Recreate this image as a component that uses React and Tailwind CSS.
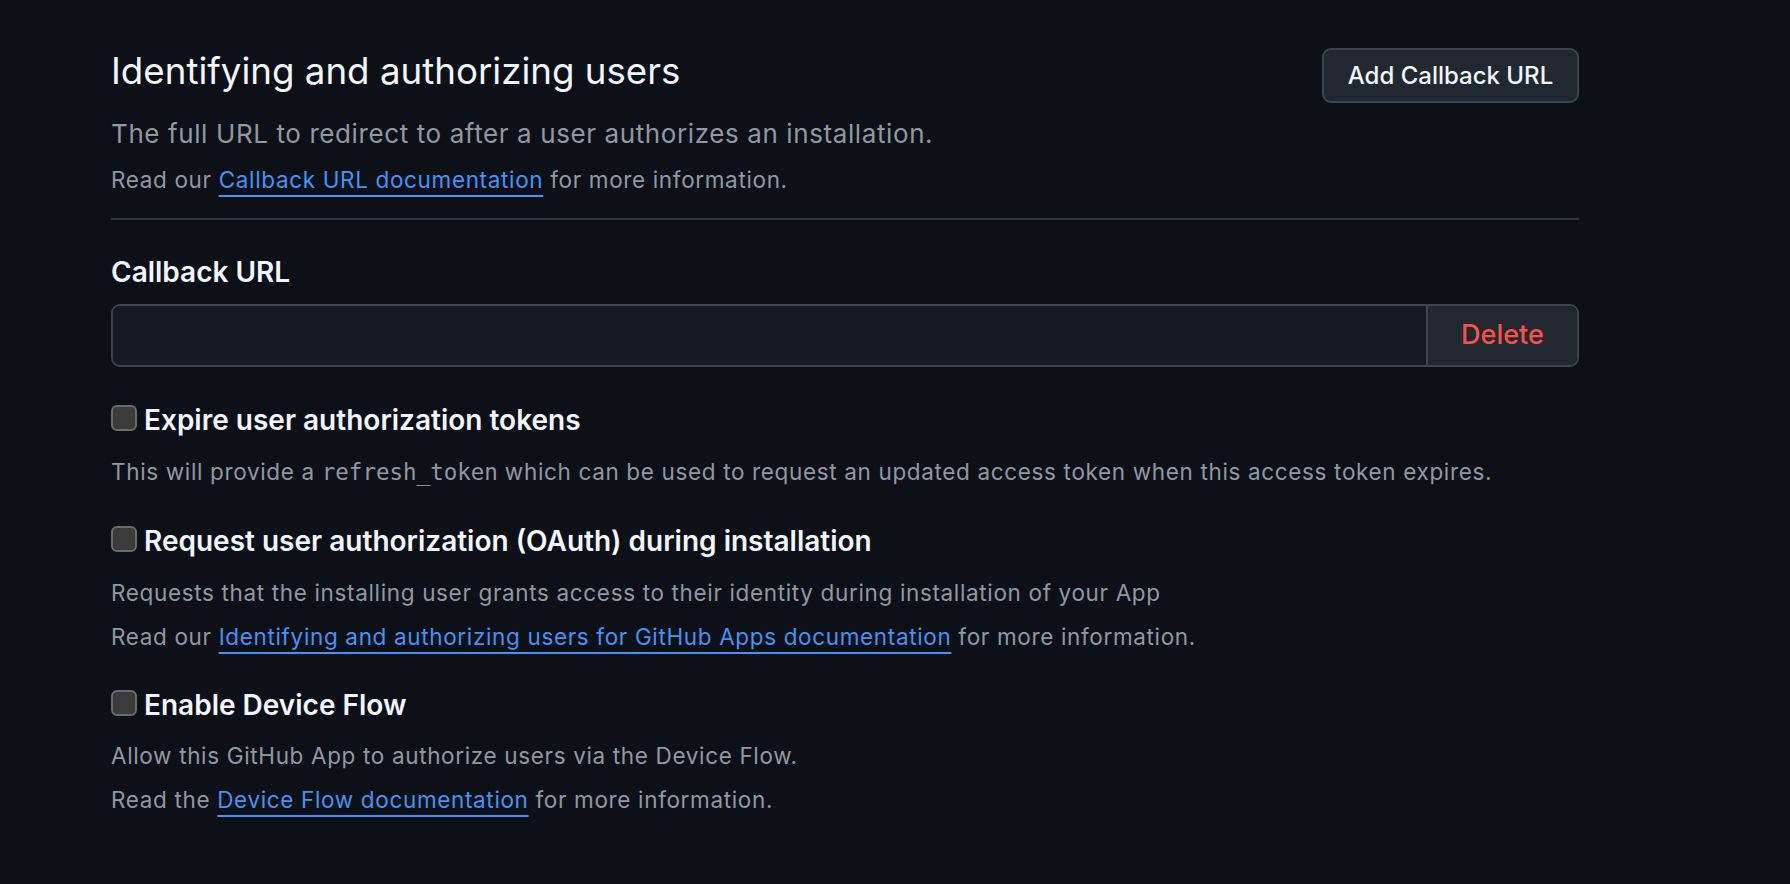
import React from 'react';

const link = 'text-[#4493f8] underline decoration-2 underline-offset-[7px]';
const muted = 'text-[22.5px] leading-[32px] tracking-[0.65px] text-[#9198a1]';

function Check({ label }) {
  return (
    <div className="flex items-start gap-[7px]">
      <span className="mt-[3px] h-[26px] w-[26px] shrink-0 rounded-[6px] border-2 border-[#6b6b6b] bg-[#3b3b3b]" />
      <span className="text-[28px] leading-[36px] font-semibold text-[#f0f6fc]">{label}</span>
    </div>
  );
}

export default function App() {
  return (
    <div className="min-h-screen bg-[#0d1117] font-['Inter',sans-serif]">
      <div className="w-[1579px] pl-[111px] pt-[48px]">
        {/* Subhead */}
        <div className="flex items-start justify-between border-b-2 border-[#2f353d] pb-[22px]">
          <div>
            <h2 className="text-[36.7px] leading-[46px] text-[#f0f6fc]">Identifying and authorizing users</h2>
            <p className="mt-[22px] text-[26px] leading-[36px] tracking-[0.6px] text-[#9198a1]">
              The full URL to redirect to after a user authorizes an installation.
            </p>
            <p className={`mt-[12px] ${muted}`}>
              Read our <a href="#" className={link}>Callback URL documentation</a> for more information.
            </p>
          </div>
          <button className="h-[55px] w-[257px] rounded-[9px] border-2 border-[#3d444d] bg-[#212830] text-[24px] font-medium text-[#f0f6fc]">
            Add Callback URL
          </button>
        </div>

        {/* Callback URL field */}
        <label className="mt-[36px] inline-block text-[28px] leading-[32px] font-semibold text-[#f0f6fc]">Callback URL</label>
        <div className="mt-[16px] flex h-[63px] overflow-hidden rounded-[9px] border-2 border-[#3d444d]">
          <input className="flex-1 bg-[#151b23] px-4 text-[24px] text-[#f0f6fc] outline-none" />
          <button className="w-[151px] border-l-2 border-[#3d444d] bg-[#212830] text-[27px] font-medium text-[#f85149]">
            Delete
          </button>
        </div>

        <div className="mt-[35px]">
          <Check label="Expire user authorization tokens" />
          <p className={`mt-[18px] ${muted}`}>
            This will provide a <code className="font-['DejaVu_Sans_Mono',monospace] text-[22.5px] tracking-normal">refresh_token</code> which can be used to request an updated access token when this access token expires.
          </p>
        </div>

        <div className="mt-[35px]">
          <Check label="Request user authorization (OAuth) during installation" />
          <p className={`mt-[18px] ${muted}`}>
            Requests that the installing user grants access to their identity during installation of your App
          </p>
          <p className={`mt-[12px] ${muted}`}>
            Read our <a href="#" className={link}>Identifying and authorizing users for GitHub Apps documentation</a> for more information.
          </p>
        </div>

        <div className="mt-[34px]">
          <Check label="Enable Device Flow" />
          <p className={`mt-[17px] ${muted}`}>
            Allow this GitHub App to authorize users via the Device Flow.
          </p>
          <p className={`mt-[12px] ${muted}`}>
            Read the <a href="#" className={link}>Device Flow documentation</a> for more information.
          </p>
        </div>
      </div>
    </div>
  );
}
